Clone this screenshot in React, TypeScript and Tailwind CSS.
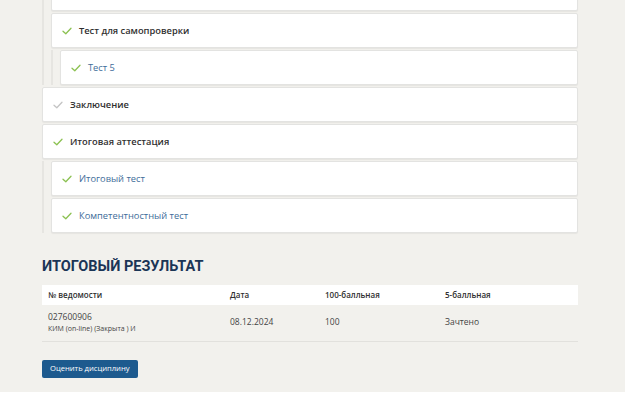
import React from 'react';

type Item = {
  title: string;
  leaf?: boolean;
  done?: boolean;
};

const font = { fontFamily: '"Segoe UI", "Open Sans", "Noto Sans", sans-serif' };

function Check({ done = true }: { done?: boolean }) {
  return (
    <svg width="10" height="8" viewBox="0 0 10 8" className="shrink-0">
      <polyline
        points="1,4.2 3.8,6.8 9,1.2"
        fill="none"
        stroke={done ? '#8cc152' : '#c4c4c4'}
        strokeWidth="1.3"
        strokeLinecap="round"
        strokeLinejoin="round"
      />
    </svg>
  );
}

function Row({ title, leaf, done = true }: Item) {
  return (
    <div className="h-[35px] mb-[2px] bg-white border border-[#e3e3e1] rounded-[2px] shadow-[0_1px_1px_rgba(0,0,0,0.05)] flex items-center gap-[7px] pl-[10px]">
      <Check done={done} />
      <span
        className={
          leaf
            ? 'text-[9.3px] text-[#3e6c99]'
            : 'text-[9.3px] font-semibold text-[#2f2f2f]'
        }
      >
        {title}
      </span>
    </div>
  );
}

function Group({ children }: { children: React.ReactNode }) {
  return <div className="border-l-2 border-[#e6e5e1] pl-[7px]">{children}</div>;
}

export default function App() {
  return (
    <div className="w-[631px] h-[399px] bg-white" style={font}>
      <div className="w-[625px] h-[392px] bg-[#f2f1ed] pl-[42px] pr-[47px] overflow-hidden">
        <Group>
          {/* previous item, scrolled mostly out of view */}
          <div className="-mt-[24px] h-[35px] mb-[2px] bg-white border border-[#e3e3e1] rounded-[2px] shadow-[0_1px_1px_rgba(0,0,0,0.05)]" />
          <Row title="Тест для самопроверки" />
          <Group>
            <Row title="Тест 5" leaf />
          </Group>
        </Group>
        <Row title="Заключение" done={false} />
        <Row title="Итоговая аттестация" />
        <Group>
          <Row title="Итоговый тест" leaf />
          <Row title="Компетентностный тест" leaf />
        </Group>

        <h2
          className="mt-[27px] text-[14.5px] font-bold text-[#1b3556] leading-none"
          style={{ fontFamily: 'Roboto, "Noto Sans", sans-serif' }}
        >
          ИТОГОВЫЙ РЕЗУЛЬТАТ
        </h2>

        <div className="mt-[10px]">
          <div className="grid grid-cols-[182px_95px_120px_139px] h-[20px] bg-white items-center text-[8px] font-semibold text-[#2f2f2f]">
            <div className="pl-[6px]">№ ведомости</div>
            <div className="pl-[6px]">Дата</div>
            <div className="pl-[6px]">100-балльная</div>
            <div className="pl-[6px]">5-балльная</div>
          </div>
          <div className="grid grid-cols-[182px_95px_120px_139px] h-[37px] items-center border-b border-[#e2e1dd] text-[#444] text-[8.5px]">
            <div className="pl-[6px] leading-[12px]">
              <div>027600906</div>
              <div className="text-[7px]">КИМ (on-line) (Закрыта ) И</div>
            </div>
            <div className="pl-[6px]">08.12.2024</div>
            <div className="pl-[6px]">100</div>
            <div className="pl-[6px]">Зачтено</div>
          </div>
        </div>

        <button className="mt-[18px] h-[18px] px-[8px] bg-[#1d5a8e] rounded-[2px] text-white text-[7.6px] leading-none">
          Оценить дисциплину
        </button>
      </div>
    </div>
  );
}
